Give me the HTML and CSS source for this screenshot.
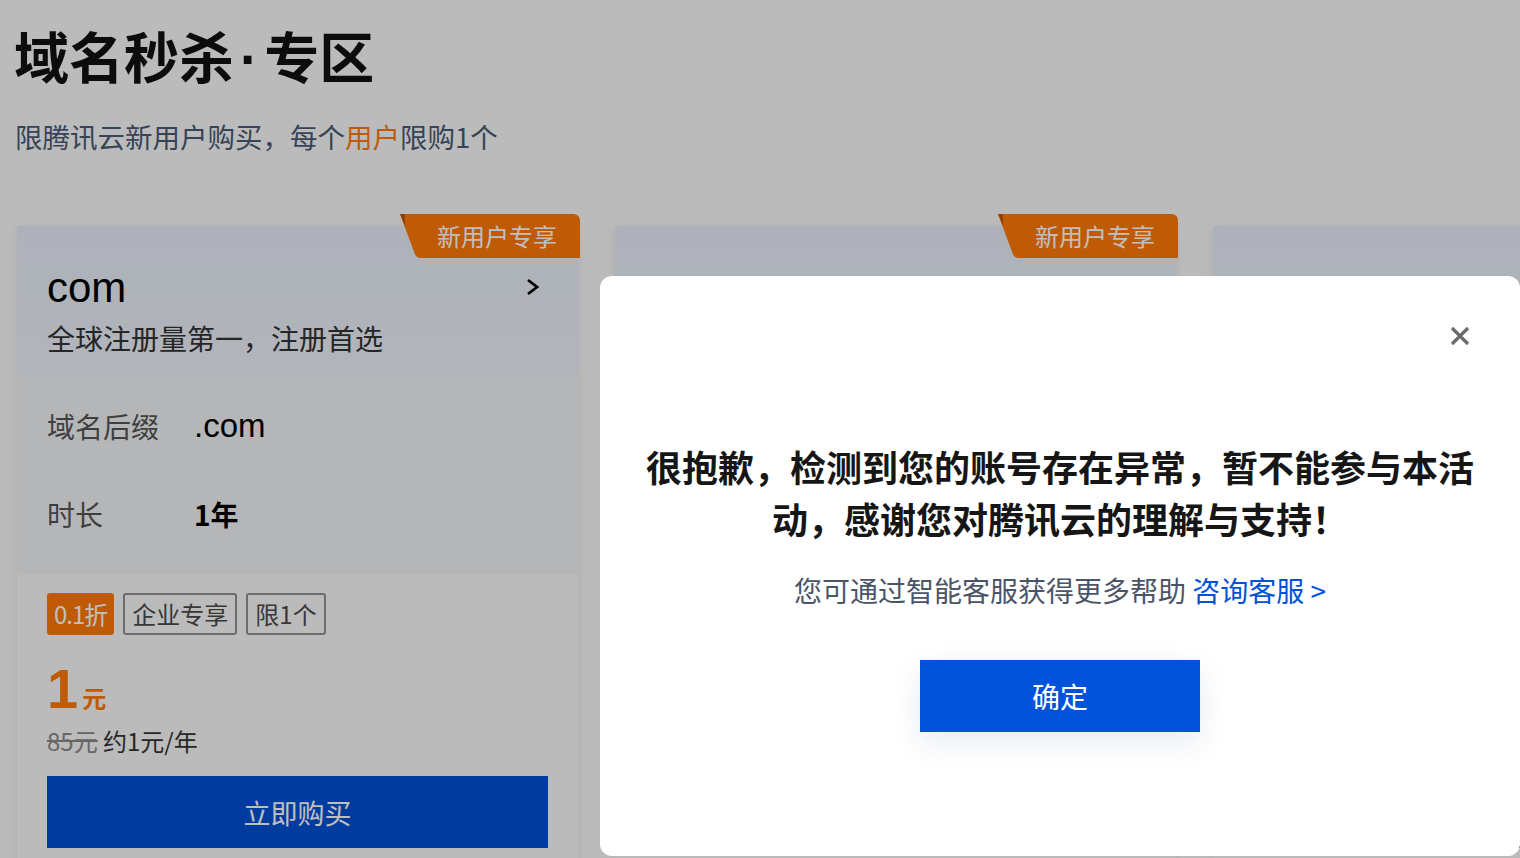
FILE: index.html
```html
<!DOCTYPE html>
<html lang="zh-CN">
<head>
    <meta charset="UTF-8">
    <meta name="viewport" content="width=device-width, initial-scale=1.0">
    <title>域名秒杀·专区</title>
    <link rel="stylesheet" href="styles.css">
</head>
<body>

<div class="page">
    <h1 class="title">域名秒杀<span class="dot">·</span>专区</h1>
    <p class="subtitle">限腾讯云新用户购买，每个<span class="hl">用户</span>限购1个</p>

    <div class="cards">
        <!-- .com -->
        <div class="card">
            <div class="ribbon">
                <svg class="ribbon-bg" viewBox="0 0 180 44" preserveAspectRatio="none">
                    <path d="M0 0 H173 Q180 0 180 7 V44 H21 Q16 44 14.5 39 Z" fill="#ff7a0a"/>
                    <path d="M0 0 L5 0 L5 12 Z" fill="#c45400"/>
                </svg>
                <span>新用户专享</span>
            </div>
            <div class="card-head">
                <div class="card-name">
                    <span>com</span>
                    <svg class="chevron" viewBox="0 0 14 18"><polyline points="2,2 11,9 2,16" fill="none" stroke="#000" stroke-width="2.8"/></svg>
                </div>
                <div class="card-desc">全球注册量第一，注册首选</div>
            </div>
            <div class="specs">
                <div class="spec-label">域名后缀</div>
                <div class="spec-value latin">.com</div>
                <div class="spec-label">时长</div>
                <div class="spec-value bold">1年</div>
            </div>
            <div class="card-foot">
                <div class="tags">
                    <span class="tag tag-hot">0.1折</span>
                    <span class="tag">企业专享</span>
                    <span class="tag">限1个</span>
                </div>
                <div class="price"><b>1</b><span>元</span></div>
                <div class="orig"><s>85元</s> 约1元/年</div>
                <button class="buy">立即购买</button>
                <div class="sold">已抢 44%</div>
            </div>
        </div>

        <!-- .cn -->
        <div class="card">
            <div class="ribbon">
                <svg class="ribbon-bg" viewBox="0 0 180 44" preserveAspectRatio="none">
                    <path d="M0 0 H173 Q180 0 180 7 V44 H21 Q16 44 14.5 39 Z" fill="#ff7a0a"/>
                    <path d="M0 0 L5 0 L5 12 Z" fill="#c45400"/>
                </svg>
                <span>新用户专享</span>
            </div>
            <div class="card-head">
                <div class="card-name">
                    <span>cn</span>
                    <svg class="chevron" viewBox="0 0 14 18"><polyline points="2,2 11,9 2,16" fill="none" stroke="#000" stroke-width="2.8"/></svg>
                </div>
                <div class="card-desc">中国国家顶级域名</div>
            </div>
            <div class="specs">
                <div class="spec-label">域名后缀</div>
                <div class="spec-value latin">.cn</div>
                <div class="spec-label">时长</div>
                <div class="spec-value bold">1年</div>
            </div>
            <div class="card-foot">
                <div class="tags">
                    <span class="tag tag-hot">0.5折</span>
                    <span class="tag">企业专享</span>
                    <span class="tag">限1个</span>
                </div>
                <div class="price"><b>1</b><span>元</span></div>
                <div class="orig"><s>38元</s> 约1元/年</div>
                <button class="buy">立即购买</button>
                <div class="sold">已抢 88%</div>
            </div>
        </div>

        <!-- .xyz -->
        <div class="card">
            <div class="card-head">
                <div class="card-name">
                    <span>xyz</span>
                    <svg class="chevron" viewBox="0 0 14 18"><polyline points="2,2 11,9 2,16" fill="none" stroke="#000" stroke-width="2.8"/></svg>
                </div>
                <div class="card-desc">简短易记，适合个人及企业</div>
            </div>
            <div class="specs">
                <div class="spec-label">域名后缀</div>
                <div class="spec-value latin">.xyz</div>
                <div class="spec-label">时长</div>
                <div class="spec-value bold">1年</div>
            </div>
            <div class="card-foot">
                <div class="tags">
                    <span class="tag">限1个</span>
                </div>
                <div class="price"><b>9</b><span>元</span></div>
                <div class="orig"><s>29元</s> 约9元/年</div>
                <button class="buy">立即购买</button>
                <div class="sold">已抢 62%</div>
            </div>
        </div>
    </div>
</div>

<!-- popup -->
<div class="mask"></div>
<div class="dialog">
    <button class="dialog-close" aria-label="关闭">
        <svg viewBox="0 0 20 20"><path d="M2 2 L18 18 M18 2 L2 18" stroke="#6b6b6b" stroke-width="3.2" fill="none"/></svg>
    </button>
    <p class="dialog-msg">很抱歉，检测到您的账号存在异常，暂不能参与本活动，感谢您对腾讯云的理解与支持！</p>
    <p class="dialog-help">您可通过智能客服获得更多帮助 <a href="#">咨询客服 &gt;</a></p>
    <button class="dialog-ok">确定</button>
</div>

</body>
</html>
```

FILE: styles.css
```css
body {
    margin: 0;
    height: 100vh;
    overflow: hidden;
    background-color: #fafafa;
    font-family: "Noto Sans CJK SC", "Liberation Sans", sans-serif;
    color: #000;
}
.page {
    padding: 22px 0 0 16px;
}
.title {
    height: 64px;
    margin: 0 0 0 -2px;
    font-size: 55px;
    line-height: 64px;
    font-weight: 700;
    color: #111;
}
.title .dot {
    font-family: "Liberation Sans", sans-serif;
    line-height: 0;
    margin: 0 6px;
}
.subtitle {
    margin: 30px 0 0 -1px;
    font-size: 27.5px;
    line-height: 40px;
    color: #4a5a74;
}
.hl {
    color: #ff7a0a;
}
.cards {
    display: flex;
    gap: 37px;
    margin-top: 70px;
    padding-left: 1px;
}
.card {
    position: relative;
    flex: 0 0 561px;
    background-color: #fafafa;
    box-shadow: 0 2px 10px rgba(0, 0, 0, 0.08);
}
.ribbon {
    position: absolute;
    top: -12px;
    right: -2px;
    width: 180px;
    height: 44px;
    display: flex;
    align-items: center;
    justify-content: flex-end;
    padding-right: 23px;
    box-sizing: border-box;
}
.ribbon-bg {
    position: absolute;
    left: 0;
    top: 0;
    width: 100%;
    height: 100%;
}
.ribbon span {
    position: relative;
    font-size: 24px;
    color: #fff;
    line-height: 44px;
}
.card-head {
    padding: 38px 38px 17px 30px;
    background: linear-gradient(180deg, #e7edf8, #edf1f8);
}
.card-name {
    display: flex;
    align-items: center;
    justify-content: space-between;
    font-family: "Liberation Sans", sans-serif;
    font-size: 42px;
    line-height: 48px;
}
.chevron {
    width: 14px;
    height: 18px;
    margin-top: -2px;
}
.card-desc {
    margin-top: 6px;
    font-size: 28px;
    line-height: 40px;
    color: #333;
}
.specs {
    display: grid;
    grid-template-columns: 147px 1fr;
    grid-auto-rows: 88px;
    align-items: center;
    padding: 7px 30px 17px;
    background-color: #f2f3f6;
}
.spec-label {
    font-size: 28px;
    color: #555;
}
.spec-value {
    font-size: 28px;
}
.spec-value.latin {
    font-family: "Liberation Sans", sans-serif;
    font-size: 33px;
}
.spec-value.bold {
    font-weight: 700;
}
.card-foot {
    padding: 18px 30px 0;
}
.tags {
    display: flex;
    gap: 9px;
}
.tag {
    height: 42px;
    line-height: 38px;
    padding: 0 7px;
    font-size: 24px;
    color: #4a4a4a;
    border: 2px solid #909090;
    border-radius: 3px;
    box-sizing: border-box;
}
.tag-hot {
    padding: 0 5px;
    background-color: #ff7a0a;
    border-color: #ff7a0a;
    color: #fff;
    letter-spacing: -1px;
}
.price {
    margin-top: 24px;
    height: 60px;
    display: flex;
    align-items: baseline;
    color: #ff7a0a;
}
.price b {
    font-family: "Liberation Sans", sans-serif;
    font-size: 56px;
    line-height: 60px;
    letter-spacing: -2px;
}
.price span {
    margin-left: 6px;
    font-size: 24px;
    font-weight: 700;
}
.orig {
    margin-top: 7px;
    font-size: 24px;
    line-height: 30px;
    color: #333;
}
.orig s {
    color: #888;
}
.buy {
    display: block;
    width: 100%;
    height: 72px;
    margin-top: 20px;
    border: none;
    background-color: #0050d6;
    color: #fff;
    font-family: inherit;
    font-size: 27px;
}
.sold {
    margin-top: 4px;
    text-align: right;
    font-size: 22px;
    color: #666;
}
.mask {
    position: fixed;
    top: 0;
    left: 0;
    right: 0;
    bottom: 0;
    background-color: rgba(0, 0, 0, 0.25);
}
.dialog {
    position: fixed;
    left: 600px;
    top: 276px;
    width: 920px;
    height: 580px;
    padding: 164px 40px 0;
    box-sizing: border-box;
    background-color: #fff;
    border-radius: 12px;
    text-align: center;
}
.dialog-close {
    position: absolute;
    top: 50px;
    right: 50px;
    width: 20px;
    height: 20px;
    padding: 0;
    border: none;
    background: none;
}
.dialog-close svg {
    display: block;
    width: 20px;
    height: 20px;
}
.dialog-msg {
    margin: 0;
    font-size: 36px;
    line-height: 52px;
    font-weight: 700;
    color: #161616;
}
.dialog-help {
    margin: 26px 0 0;
    font-size: 28px;
    line-height: 40px;
    color: #4b5568;
}
.dialog-help a {
    color: #0052d9;
    text-decoration: none;
}
.dialog-ok {
    width: 280px;
    height: 72px;
    margin-top: 50px;
    border: none;
    background-color: #0052d9;
    color: #fff;
    font-family: inherit;
    font-size: 28px;
    box-shadow: 0 10px 30px rgba(20, 50, 110, 0.1);
}
```
